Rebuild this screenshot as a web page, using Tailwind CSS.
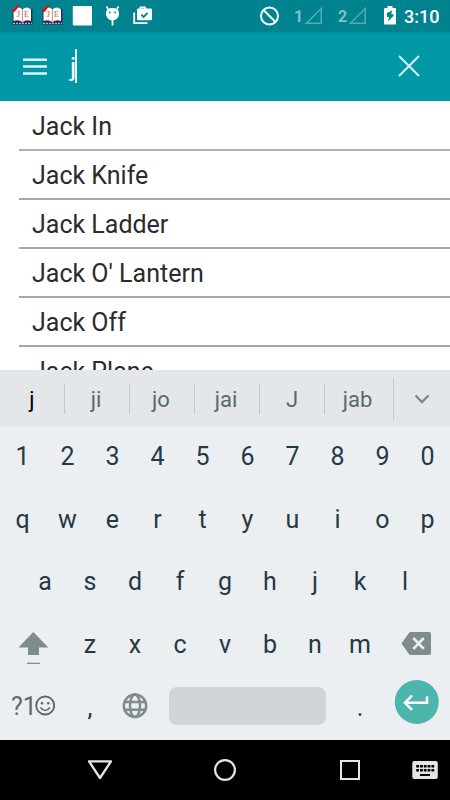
<!DOCTYPE html>
<html lang="en">
<head>
  <meta charset="UTF-8" />
  <meta name="viewport" content="width=device-width, initial-scale=1" />
  <title>Dictionary Search</title>
  <script src="https://cdn.jsdelivr.net/npm/@tailwindcss/browser@4"></script>
  <style>
    body {
      font-family: Roboto, sans-serif;
    }
  </style>
</head>
<body class="w-[450px] h-[800px] overflow-hidden flex flex-col bg-white">
  <!-- Status bar -->
  <div class="h-8 shrink-0 bg-[#00838f] flex items-center pl-[7px] text-white">
    <svg class="w-[30px] h-8 shrink-0" viewBox="0 0 30 32">
      <path d="M5.500 9h20v13h-20z" fill="#253052" />
      <path d="M6.500 9.500q5-4 9 0q4-4 8.500 0v11.500q-5-2-8.500 1q-4-3-9-1z" fill="#fff" />
      <path d="M15.400 9v12" stroke="#9a9aa5" />
      <path d="M4.500 11.500l6-6.500h2.500L7.500 12z" fill="#f00" />
      <text x="9.500" y="16.500" font-size="7.500" font-weight="bold" fill="#e2855c" font-family="Liberation Serif, serif">J</text>
      <text x="17" y="16.500" font-size="7.500" font-weight="bold" fill="#e2855c" font-family="Liberation Serif, serif">E</text>
      <path d="M5.500 23.500h20" stroke="#253052" stroke-width="3" />
      <path d="M6 23.500h19" stroke="#a9b4da" stroke-width="1.500" stroke-dasharray="2 1" />
      <path d="M14 22.500h3" stroke="#d3205c" />
    </svg>
    <svg class="w-[30px] h-8 shrink-0" viewBox="0 0 30 32">
      <path d="M5.500 9h20v13h-20z" fill="#253052" />
      <path d="M6.500 9.500q5-4 9 0q4-4 8.500 0v11.500q-5-2-8.500 1q-4-3-9-1z" fill="#fff" />
      <path d="M15.400 9v12" stroke="#9a9aa5" />
      <path d="M4.500 11.500l6-6.500h2.500L7.500 12z" fill="#f00" />
      <text x="9.500" y="16.500" font-size="7.500" font-weight="bold" fill="#e2855c" font-family="Liberation Serif, serif">J</text>
      <text x="17" y="16.500" font-size="7.500" font-weight="bold" fill="#e2855c" font-family="Liberation Serif, serif">E</text>
      <path d="M5.500 23.500h20" stroke="#253052" stroke-width="3" />
      <path d="M6 23.500h19" stroke="#a9b4da" stroke-width="1.500" stroke-dasharray="2 1" />
      <path d="M14 22.500h3" stroke="#d3205c" />
    </svg>
    <svg class="w-[30px] h-8 shrink-0" viewBox="0 0 30 32">
      <rect x="5.800" y="6" width="19.200" height="19.500" rx="1" fill="#fff" />
    </svg>
    <svg class="w-[30px] h-8 shrink-0" viewBox="0 0 30 32">
      <path d="M11 9L9.500 6.500M20 9l1.500-2.500M15.500 19v6.500" stroke="#fff" stroke-width="1.800" />
      <path d="M9 13.500C9 9.500 11.500 8 15.500 8S22 9.500 22 13.500c0 4-3 7-6.500 7S9 17.500 9 13.500z" fill="#fff" />
      <circle cx="12.800" cy="12.500" r=".9" fill="#00838f" />
      <circle cx="18.200" cy="12.500" r=".9" fill="#00838f" />
    </svg>
    <svg class="w-[30px] h-8 shrink-0" viewBox="0 0 30 32">
      <path d="M7.200 12.500v10.700H20.500" fill="none" stroke="#fff" stroke-width="1.800" />
      <path d="M13.500 9V7.300h4.500V9" fill="none" stroke="#fff" stroke-width="1.800" />
      <rect x="10" y="8.500" width="15" height="11.800" rx="1.200" fill="#fff" />
      <path d="M14.300 14.700l2.300 2.200 4-4" fill="none" stroke="#00838f" stroke-width="1.800" />
    </svg>
    <svg class="w-5 h-8 shrink-0 ml-[102px]" viewBox="0 0 20 32" fill="none" stroke="#fff" stroke-width="1.900">
      <circle cx="10.500" cy="16" r="8.500" />
      <path d="M4.500 10l12 12" />
    </svg>
    <span class="w-[10px] ml-[15px] pt-px text-[16px] leading-8 font-bold text-white/50">1</span>
    <svg class="w-5 h-8 shrink-0" viewBox="0 0 20 32">
      <path d="M2.500 23.200L17.200 8.500v14.700z" fill="none" stroke="#fff" stroke-opacity=".33" stroke-width="1.500" />
    </svg>
    <span class="w-[10px] ml-[14px] pt-px text-[16px] leading-8 font-bold text-white/50">2</span>
    <svg class="w-5 h-8 shrink-0" viewBox="0 0 20 32">
      <path d="M2.500 23.200L17.200 8.500v14.700z" fill="none" stroke="#fff" stroke-opacity=".33" stroke-width="1.500" />
    </svg>
    <svg class="w-[14px] h-8 shrink-0 ml-[15px]" viewBox="0 0 14 32">
      <path d="M1 9q0-1 1-1h2.500V6h5v2H12q1 0 1 1v14.500q0 1-1 1H2q-1 0-1-1z" fill="#fff" />
      <path d="M9.300 10.500L4 13v4h2.200l-1.400 4.500L10.500 16V14.300H8.200z" fill="#00838f" />
    </svg>
    <span class="ml-[7px] pt-px text-[18px] leading-8 font-medium whitespace-nowrap">3:10</span>
  </div>

  <!-- Search bar -->
  <header class="h-[69px] shrink-0 bg-[#0097a7] flex items-center border-t border-[#008c9a] pl-[23px] pr-[30px]">
    <svg class="w-6 h-6 shrink-0" viewBox="0 0 24 24" stroke="#e2f4f6" stroke-width="2.500">
      <path d="M0 4.800h24M0 11.600h24M0 18.400h24" />
    </svg>
    <div class="flex items-center ml-[23px] flex-1">
      <span class="text-[26px] leading-8 text-white w-[5px]">j</span>
      <span class="w-[2px] h-[34px] -mt-[2px] bg-[#e5f4f6]"></span>
    </div>
    <svg class="w-[22px] h-[22px] -mt-[2px]" viewBox="0 0 22 22" stroke="#d9f0f2" stroke-width="2">
      <path d="M1 1l20 20M21 1L1 21" />
    </svg>
  </header>

  <!-- Results -->
  <main class="h-[269px] shrink-0 overflow-hidden text-[25px] leading-[52px] text-[#2b2b2b]">
    <div class="h-[50px] ml-[18.500px] pl-[13.500px] border-b-2 border-[#b0b0b0]">Jack In</div>
    <div class="h-[49px] ml-[18.500px] pl-[13.500px] border-b-2 border-[#a6a6a6] leading-[50px]">Jack Knife</div>
    <div class="h-[49px] ml-[18.500px] pl-[13.500px] border-b-2 border-[#a6a6a6] leading-[50px]">Jack Ladder</div>
    <div class="h-[49px] ml-[18.500px] pl-[13.500px] border-b-2 border-[#a6a6a6] leading-[50px]">Jack O' Lantern</div>
    <div class="h-[49px] ml-[18.500px] pl-[13.500px] border-b-2 border-[#a6a6a6] leading-[50px]">Jack Off</div>
    <div class="h-[49px] ml-[18.500px] pl-[13.500px] leading-[50px]">Jack Plane</div>
  </main>

  <!-- Suggestions -->
  <div class="h-[57px] shrink-0 bg-[#e3e7e9] flex items-center text-[22px] text-[#5a686e] text-center">
    <span class="w-16 pt-[2px] text-black">j</span>
    <span class="w-px h-[30px] bg-[#c3c9cc]"></span>
    <span class="w-16 pt-[2px] pr-[2px]">ji</span>
    <span class="w-px h-[30px] bg-[#c3c9cc]"></span>
    <span class="w-16 pt-[2px] pr-[2px]">jo</span>
    <span class="w-px h-[30px] bg-[#c3c9cc]"></span>
    <span class="w-16 pt-[2px] pr-[2px]">jai</span>
    <span class="w-px h-[30px] bg-[#c3c9cc]"></span>
    <span class="w-16 pt-[2px]">J</span>
    <span class="w-px h-[30px] bg-[#c3c9cc]"></span>
    <span class="w-[68px] pt-[2px] pr-[3px]">jab</span>
    <span class="w-px h-[42px] bg-[#c3c9cc]"></span>
    <svg class="w-14 h-[57px]" viewBox="0 0 56 57">
      <path d="M21.500 25.500l6.500 6.500 6.500-6.500" fill="none" stroke="#7d898d" stroke-width="2.400" />
    </svg>
  </div>

  <!-- Keyboard -->
  <div class="h-[313px] shrink-0 bg-[#ebeff2] text-[25px] text-[#263942] text-center leading-[60px]">
    <div id="digits" class="h-[63px] grid grid-cols-10"></div>
    <div id="row1" class="h-[62px] grid grid-cols-10"></div>
    <div id="row2" class="h-[63px] grid grid-cols-9 px-[22.500px]"></div>
    <div class="h-[62px] flex">
      <svg class="w-[67.500px] h-[62px]" viewBox="0 0 67.500 62" fill="#7f8b8f">
        <path d="M33.300 17L48.300 32.500H39V40H28v-7.500h-9.500z" />
        <path d="M27 47.700h13v1.300H27z" />
      </svg>
      <div id="row3" class="w-[315px] grid grid-cols-7"></div>
      <svg class="w-[67.500px] h-[62px]" viewBox="0 0 67.500 62">
        <path d="M18.500 28.500l7-10q1-1.400 2.500-1.400h18q2 0 2 2v19q0 2-2 2H28q-1.500 0-2.500-1.500z" fill="#7f8b8f" />
        <path d="M30.300 23l10.500 10.800M40.800 23L30.300 33.800" stroke="#ebeff2" stroke-width="2.600" />
      </svg>
    </div>
    <div class="h-[63px] flex">
      <div class="w-[67.500px] flex pl-[11px] text-[#5c6a70]">
        <span>?1</span>
        <svg class="w-5 h-[62px] -ml-[2px]" viewBox="0 0 20 62" fill="none" stroke="#5c6a70" stroke-width="1.900">
          <circle cx="10.200" cy="28.500" r="9" />
          <path d="M5.500 30.500q4.700 6 9.400 0" stroke-width="1.600" />
          <circle cx="7" cy="26.300" r="1.300" fill="#5c6a70" stroke="none" />
          <circle cx="13.300" cy="26.300" r="1.300" fill="#5c6a70" stroke="none" />
        </svg>
      </div>
      <span class="w-[45px] pt-px">,</span>
      <svg class="w-[45px] h-[62px]" viewBox="0 0 45 62" fill="none" stroke="#7f8b8f" stroke-width="2.500">
        <circle cx="22" cy="28.800" r="11.200" />
        <ellipse cx="22" cy="28.800" rx="5" ry="11.200" />
        <path d="M12 25h20M12 32.700h20" />
      </svg>
      <div class="w-[157px] h-[38px] mt-[10px] ml-[11.500px] rounded-lg bg-[#d0d5d8]"></div>
      <span class="w-[45px] ml-[11.500px] pt-px">.</span>
      <svg class="w-[67.500px] h-[62px]" viewBox="0 0 67.500 62">
        <circle cx="33.800" cy="25" r="22" fill="#4db6ac" />
        <path d="M44 19.500v6.300H22.500M29 18.500l-7 7.300 7 7" fill="none" stroke="#fff" stroke-width="2.500" />
      </svg>
    </div>
  </div>

  <!-- Navigation bar -->
  <nav class="h-[60px] shrink-0 bg-black flex items-center">
    <svg class="w-[125px] h-[60px] ml-[37px]" viewBox="0 0 125 60" fill="none" stroke="#e5e5e5" stroke-width="2.300">
      <path d="M52 21.300h22L63 38z" stroke-linejoin="round" />
    </svg>
    <svg class="w-[125px] h-[60px]" viewBox="0 0 125 60" fill="none" stroke="#e5e5e5" stroke-width="2.200">
      <circle cx="63" cy="30" r="9.900" />
    </svg>
    <svg class="w-[125px] h-[60px]" viewBox="0 0 125 60" fill="none" stroke="#e5e5e5" stroke-width="2">
      <rect x="54" y="21" width="18" height="18" />
    </svg>
    <svg class="w-[26px] h-[60px]" viewBox="0 0 26 60">
      <rect y="21" x=".3" width="25.500" height="18" rx="2" fill="#e5e5e5" />
      <path d="M4.200 26.300h18M4.200 30.300h18" stroke="#000" stroke-width="2.500" stroke-dasharray="2.800 1" />
      <path d="M8 35h10" stroke="#000" stroke-width="2" />
    </svg>
  </nav>

  <script>
    const rows = {
      digits: "1234567890",
      row1: "qwertyuiop",
      row2: "asdfghjkl",
      row3: "zxcvbnm",
    };

    Object.keys(rows).forEach((id) => {
      const row = document.getElementById(id);
      rows[id].split("").forEach((letter) => {
        const key = document.createElement("span");
        key.textContent = letter;
        row.appendChild(key);
      });
    });
  </script>
</body>
</html>
